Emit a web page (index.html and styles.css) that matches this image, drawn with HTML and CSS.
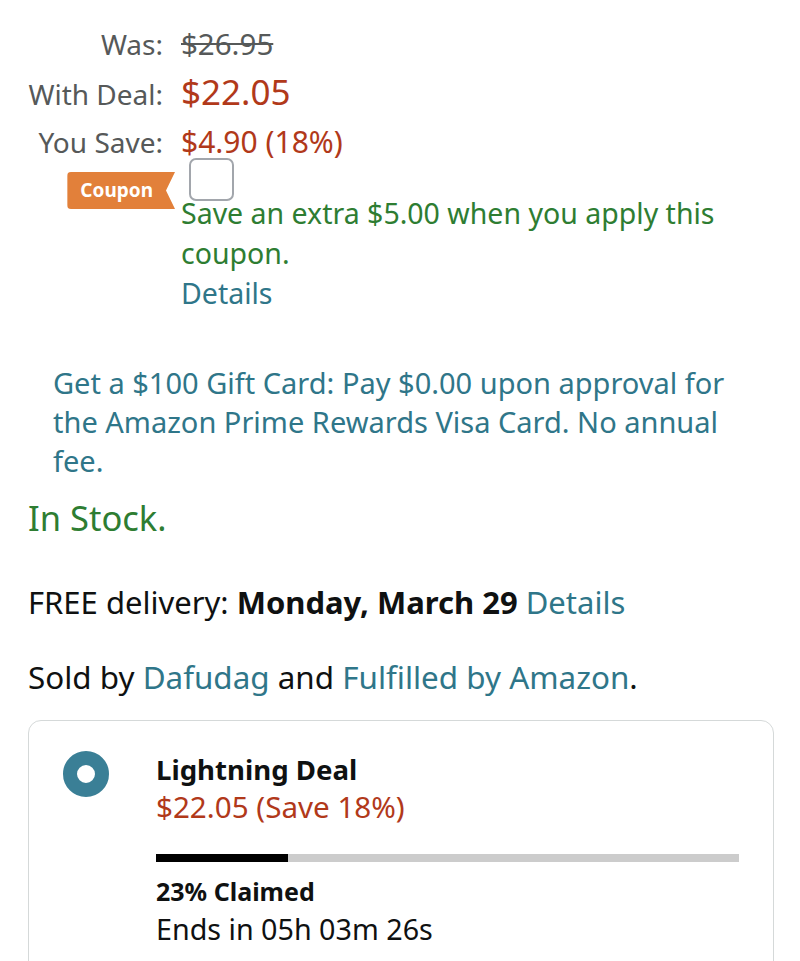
FILE: index.html
```html
<!DOCTYPE html>
<html>
<head>
<meta charset="utf-8">
<link rel="stylesheet" href="styles.css">
</head>
<body>
<div class="page">
  <div class="prices">
    <div class="label">Was:</div>
    <div class="value was">$26.95</div>
    <div class="label">With Deal:</div>
    <div class="value deal">$22.05</div>
    <div class="label">You Save:</div>
    <div class="value save">$4.90 (18%)</div>
    <div class="label coupon-cell">
      <span class="coupon">Coupon</span>
    </div>
    <div class="value coupon-body">
      <span class="checkbox"></span>
      <div class="coupon-text">Save an extra $5.00 when you apply this coupon.</div>
      <a class="link details">Details</a>
    </div>
  </div>

  <p class="gift link">Get a $100 Gift Card: Pay $0.00 upon approval for the Amazon Prime Rewards Visa Card. No annual fee.</p>

  <p class="stock">In Stock.</p>

  <p class="delivery">FREE delivery: <b>Monday, March 29</b> <a class="link">Details</a></p>

  <p class="sold">Sold by <a class="link">Dafudag</a> and <a class="link">Fulfilled by Amazon</a>.</p>

  <div class="card">
    <span class="radio"></span>
    <div class="deal-info">
      <div class="deal-title">Lightning Deal</div>
      <div class="deal-price">$22.05 (Save 18%)</div>
      <div class="bar"><div class="bar-fill" style="width:22.6%"></div></div>
      <div class="claimed">23% Claimed</div>
      <div class="ends">Ends in 05h 03m 26s</div>
    </div>
  </div>
</div>
</body>
</html>
```

FILE: styles.css
```css
* { box-sizing: border-box; }
html, body { margin: 0; padding: 0; background: #fff; }
body {
  font-family: "Noto Sans", "Open Sans", sans-serif;
  color: #0f1111;
  width: 800px;
  height: 961px;
  overflow: hidden;
}
.page { padding: 20px 28px 0 28px; }
.link { color: #2f7689; text-decoration: none; }

.prices {
  display: grid;
  grid-template-columns: 135px 1fr;
  column-gap: 18px;
  align-items: baseline;
}
.label {
  text-align: right;
  color: #565959;
  font-size: 28px;
  line-height: 48px;
  white-space: nowrap;
}
.value { font-size: 30px; line-height: 48px; color: #b1391a; white-space: nowrap; }
.was { color: #565959; text-decoration: line-through; font-size: 29.5px; }
.deal { font-size: 35px; }
.coupon-cell { align-self: start; padding-top: 6px; line-height: 1; }
.coupon {
  display: inline-block;
  background: #e2803a;
  color: #fff;
  font-weight: 700;
  font-size: 19px;
  line-height: 37px;
  height: 37px;
  padding: 0 22px 0 13px;
  border-radius: 4px 0 0 4px;
  clip-path: polygon(0 0, 100% 0, calc(100% - 9px) 50%, 100% 100%, 0 100%);
  margin-right: -12px;
}
.coupon-body { align-self: start; line-height: 40px; font-size: 28.5px; white-space: normal; }
.checkbox {
  display: block;
  width: 45px;
  height: 43px;
  border: 2px solid #a2a6ac;
  border-radius: 7px;
  margin: -8px 0 0 8px;
}
.coupon-text { color: #2e7d32; margin-top: -8px; width: 570px; }
.details { display: block; }

.gift {
  margin: 50px 0 0 25px;
  font-size: 29px;
  line-height: 39px;
  width: 700px;
}
.stock {
  margin: 16px 0 0 0;
  font-size: 34.5px;
  line-height: 44px;
  color: #2e7d32;
}
.delivery {
  margin: 42px 0 0 0;
  font-size: 31px;
  line-height: 40px;
}
.delivery b { font-weight: 700; }
.sold {
  margin: 35px 0 0 0;
  font-size: 31.4px;
  line-height: 40px;
}
.card {
  margin-top: 23px;
  border: 1px solid #d5d9d9;
  border-radius: 13px;
  width: 746px;
  height: 260px;
  display: flex;
  padding: 30px 34px 0 34px;
}
.radio {
  flex: none;
  width: 46px;
  height: 46px;
  border-radius: 50%;
  border: 14px solid #3a7f96;
  background: #fff;
  margin-top: 0;
}
.deal-info { margin-left: 47px; flex: 1; }
.deal-title { font-size: 27.6px; font-weight: 700; line-height: 36px; }
.deal-price { font-size: 29.6px; color: #b1391a; line-height: 40px; }
.bar {
  margin-top: 27px;
  height: 8px;
  background: #ccc;
  width: 583px;
}
.bar-fill { height: 100%; background: #000; }
.claimed { font-size: 25px; font-weight: 700; line-height: 30px; margin-top: 14px; }
.ends { font-size: 28.7px; line-height: 44px; margin-top: 1px; }
```
